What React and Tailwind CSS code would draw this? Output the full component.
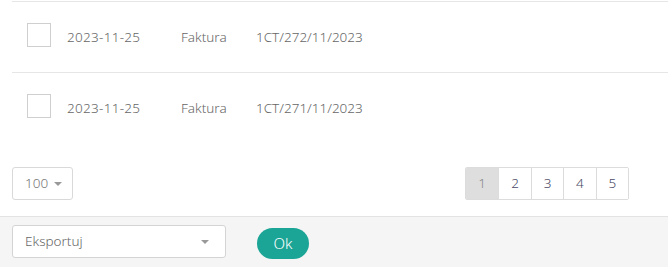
import React from "react";

const rows = [
  { date: "2023-11-25", type: "Faktura", number: "1CT/272/11/2023" },
  { date: "2023-11-25", type: "Faktura", number: "1CT/271/11/2023" },
];

const Caret = () => (
  <svg width="8" height="4" viewBox="0 0 8 4" className="fill-[#999]">
    <path d="M0 0 L8 0 L4 4 Z" />
  </svg>
);

const App = () => {
  return (
    <div
      className="w-[668px] h-[267px] bg-white flex flex-col text-[13.5px] text-[#666] font-light"
      style={{ fontFamily: '"Noto Sans", sans-serif' }}
    >
      <div className="pl-3 pt-px">
        {rows.map((row, i) => (
          <div
            key={i}
            className="flex items-center h-[71px] border-t border-[#e6e6e6]"
          >
            <div className="w-6 h-6 ml-[15px] -mt-1 border border-[#cfcfcf] bg-white" />
            <span className="ml-4 w-[114px] tracking-[0.3px]">{row.date}</span>
            <span className="w-[75px]">{row.type}</span>
            <span>{row.number}</span>
          </div>
        ))}
      </div>

      <div className="flex items-center justify-between pl-3 pr-[39px] mt-6">
        <button className="flex items-center gap-[6px] h-[33px] w-[61px] pl-3 border border-[#d9d9d9] rounded-[3px] text-[#777]">
          100 <Caret />
        </button>
        <div className="grid grid-cols-5 w-[164px] h-[33px] border border-[#dcdcdc] rounded-[2px] text-[#4a4a66] overflow-hidden">
          {[1, 2, 3, 4, 5].map((n) => (
            <div
              key={n}
              className={`flex items-center justify-center border-l border-[#dcdcdc] first:border-l-0 ${
                n === 1 ? "bg-[#dedede] text-[#888]" : "bg-white"
              }`}
            >
              {n}
            </div>
          ))}
        </div>
      </div>

      <div className="mt-auto h-[51px] border-t border-[#e3e3e3] bg-[#f5f5f5] flex items-center pl-3">
        <div className="flex items-center justify-between w-[214px] h-[33px] -mt-px px-3 bg-white border border-[#d4d4d4] rounded-[3px] text-[#666]">
          <span>Eksportuj</span>
          <span className="mr-1">
            <Caret />
          </span>
        </div>
        <button className="ml-[31px] mt-[2px] w-[52px] h-[31px] rounded-full bg-[#1ba596] text-white text-[15px] font-light">
          Ok
        </button>
      </div>
    </div>
  );
};

export default App;
